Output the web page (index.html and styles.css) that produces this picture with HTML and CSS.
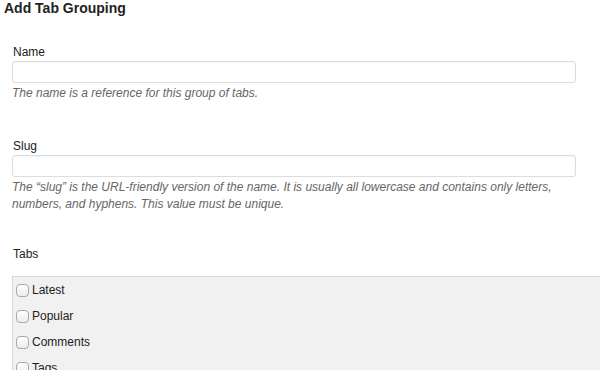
FILE: index.html
```html
<!DOCTYPE html>
<html lang="en">
<head>
  <meta charset="UTF-8" />
  <title>Add Tab Grouping</title>
  <link rel="stylesheet" href="styles.css">
</head>
<body>
  <h2 class="title">Add Tab Grouping</h2>

  <form class="tab-form">
    <div class="field">
      <label for="tag-name">Name</label>
      <input type="text" id="tag-name" />
      <p class="description">The name is a reference for this group of tabs.</p>
    </div>

    <div class="field field-slug">
      <label for="tag-slug">Slug</label>
      <input type="text" id="tag-slug" />
      <p class="description">The &ldquo;slug&rdquo; is the URL-friendly version of the name. It is usually all lowercase and contains only letters, numbers, and hyphens. This value must be unique.</p>
    </div>

    <div class="field field-tabs">
      <label>Tabs</label>
      <ul class="tab-list">
        <li><label class="check"><input type="checkbox" /> Latest</label></li>
        <li><label class="check"><input type="checkbox" /> Popular</label></li>
        <li><label class="check"><input type="checkbox" /> Comments</label></li>
        <li><label class="check"><input type="checkbox" /> Tags</label></li>
      </ul>
    </div>
  </form>
</body>
</html>
```

FILE: styles.css
```css
:root {
  --text: #333;
  --muted: #666;
  --border: #ddd;
  --box-bg: #f1f1f1;
}

body {
  margin: 0;
  font-family: 'Liberation Sans', Arial, sans-serif;
  font-size: 12px;
  color: var(--text);
  background: #fff;
  overflow: hidden;
}

.title {
  margin: 0 0 0 4px;
  font-size: 14px;
  line-height: 16px;
  font-weight: bold;
  color: #222;
}

.tab-form {
  padding: 28px 0 0 12px;
}

.field {
  margin-bottom: 36px;
}

.field-slug {
  margin-bottom: 33px;
}

.field > label {
  display: block;
  line-height: 16px;
  margin: 0 0 1px 1px;
  color: #222;
}

.field input[type="text"] {
  display: block;
  box-sizing: border-box;
  width: 564px;
  height: 22px;
  margin: 0;
  padding: 2px 4px;
  border: 1px solid var(--border);
  border-radius: 3px;
  background: #fff;
  box-shadow: inset 0 1px 2px rgba(0,0,0,0.04);
}

.description {
  margin: 2px 0 0;
  font-style: italic;
  line-height: 17px;
  color: var(--muted);
  padding-right: 8px;
}

.field-tabs > label {
  margin-bottom: 14px;
}

.tab-list {
  list-style: none;
  margin: 0;
  padding: 0 0 0 3px;
  background: var(--box-bg);
  border-top: 1px solid #d6d6d6;
  border-left: 1px solid #d6d6d6;
}

.tab-list li {
  height: 26px;
  display: flex;
  align-items: center;
}

.check {
  display: flex;
  align-items: center;
  gap: 3px;
  color: #222;
}

.check input {
  appearance: none;
  -webkit-appearance: none;
  width: 13px;
  height: 13px;
  margin: 0;
  border: 1px solid #a8a8a8;
  border-radius: 4px;
  background: linear-gradient(#fff, #ececec);
}
```
